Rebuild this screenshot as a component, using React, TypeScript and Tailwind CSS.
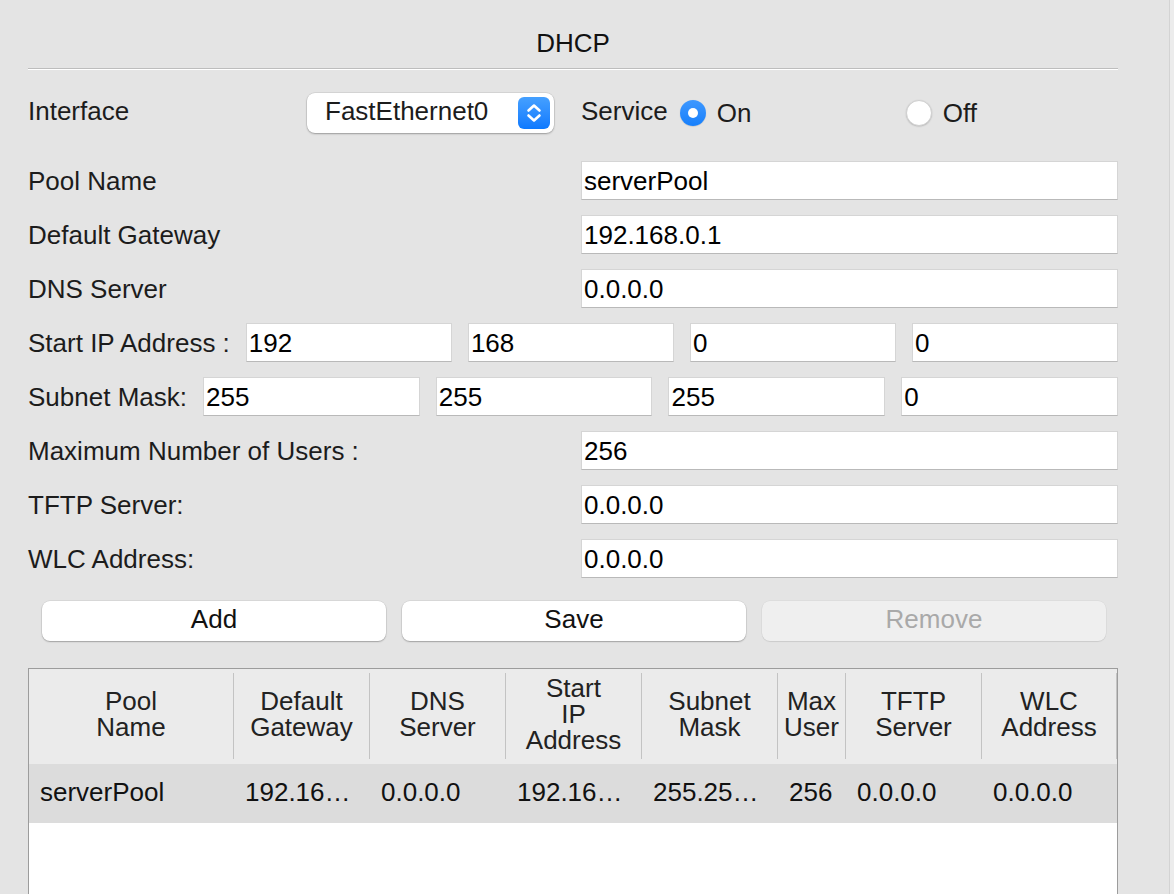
import React from "react";

const FONT = "font-['Liberation_Sans','Helvetica','Arial',sans-serif]";

function Field({ value, className = "" }: { value: string; className?: string }) {
  return (
    <div
      className={`h-[39px] bg-white border border-[#d5d5d5] border-b-[#b9b9b9] flex items-center pl-[2px] text-black whitespace-nowrap ${className}`}
    >
      <span className="leading-[26px]">{value}</span>
    </div>
  );
}

function FieldRow({ label, value }: { label: string; value: string }) {
  return (
    <div className="flex items-center h-[39px]">
      <div className="flex-1 leading-[26px] text-[#1c1c1c]">{label}</div>
      <Field value={value} className="w-[537px]" />
    </div>
  );
}

function QuadRow({ label, values }: { label: string; values: string[] }) {
  return (
    <div className="flex items-center h-[39px] gap-[16px]">
      <div className="leading-[26px] text-[#1c1c1c] whitespace-nowrap">{label}</div>
      {values.map((v, i) => (
        <Field key={i} value={v} className="flex-1 min-w-0" />
      ))}
    </div>
  );
}

function Chevrons() {
  return (
    <svg width="32" height="32" viewBox="0 0 32 32" fill="none">
      <path d="M10.5 13.5 L16 8.5 L21.5 13.5" stroke="white" strokeWidth="2.6" strokeLinecap="round" strokeLinejoin="round" />
      <path d="M10.5 18.5 L16 23.5 L21.5 18.5" stroke="white" strokeWidth="2.6" strokeLinecap="round" strokeLinejoin="round" />
    </svg>
  );
}

const COLS = [
  { w: "w-[204px]", h: ["Pool", "Name"], v: "serverPool" },
  { w: "w-[135px]", h: ["Default", "Gateway"], v: "192.16…" },
  { w: "w-[135px]", h: ["DNS", "Server"], v: "0.0.0.0" },
  { w: "w-[135px]", h: ["Start", "IP", "Address"], v: "192.16…" },
  { w: "w-[135px]", h: ["Subnet", "Mask"], v: "255.25…" },
  { w: "w-[67px]", h: ["Max", "User"], v: "256" },
  { w: "w-[135px]", h: ["TFTP", "Server"], v: "0.0.0.0" },
  { w: "w-[134px]", h: ["WLC", "Address"], v: "0.0.0.0" },
];

export default function App() {
  return (
    <div className={`w-[1174px] h-[894px] overflow-hidden bg-[#e4e4e4] flex text-[26px] ${FONT}`}>
      <div className="flex-1 pl-[28px] pr-[51px] flex flex-col">
        {/* Title */}
        <div className="pt-[30px] leading-[26px] text-center text-[#111]">DHCP</div>
        <div className="mt-[12px] h-[2px] border-t border-[#bdbdbd] border-b border-b-white" />

        {/* Interface / Service row */}
        <div className="mt-[23px] flex items-center h-[40px]">
          <div className="w-[279px] leading-[26px] text-[#1c1c1c] pb-[4px]">Interface</div>
          <div className="w-[247px] h-[40px] bg-white rounded-[8px] shadow-[0_0_0_0.5px_rgba(0,0,0,0.12),0_1px_2px_rgba(0,0,0,0.28)] flex items-center pl-[18px] pr-[4px]">
            <span className="flex-1 leading-[26px] text-[#1c1c1c] pb-[4px]">FastEthernet0</span>
            <div className="w-[32px] h-[32px] rounded-[6px] bg-gradient-to-b from-[#45a0ff] to-[#0b79ff] flex items-center justify-center">
              <Chevrons />
            </div>
          </div>
          <div className="w-[27px]" />
          <div className="leading-[26px] text-[#1c1c1c] pb-[4px]">Service</div>
          <div className="w-[226px] flex items-center ml-[12px]">
            <div className="w-[26px] h-[26px] rounded-full bg-gradient-to-b from-[#3d98ff] to-[#157ffb] flex items-center justify-center shadow-[0_0.5px_1px_rgba(0,0,0,0.2)]">
              <div className="w-[10px] h-[10px] rounded-full bg-white" />
            </div>
            <span className="ml-[11px] leading-[26px] text-[#1c1c1c]">On</span>
          </div>
          <div className="flex items-center">
            <div className="w-[26px] h-[26px] rounded-full bg-white border border-[#d0d0d0] shadow-[0_0.5px_1.5px_rgba(0,0,0,0.2)]" />
            <span className="ml-[11px] leading-[26px] text-[#1c1c1c]">Off</span>
          </div>
        </div>

        {/* Fields */}
        <div className="mt-[28px] flex flex-col gap-[15px]">
          <FieldRow label="Pool Name" value="serverPool" />
          <FieldRow label="Default Gateway" value="192.168.0.1" />
          <FieldRow label="DNS Server" value="0.0.0.0" />
          <QuadRow label="Start IP Address :" values={["192", "168", "0", "0"]} />
          <QuadRow label="Subnet Mask:" values={["255", "255", "255", "0"]} />
          <FieldRow label="Maximum Number of Users :" value="256" />
          <FieldRow label="TFTP Server:" value="0.0.0.0" />
          <FieldRow label="WLC Address:" value="0.0.0.0" />
        </div>

        {/* Buttons */}
        <div className="mt-[23px] ml-[14px] mr-[12px] flex gap-[16px]">
          <button className="flex-1 h-[40px] rounded-[8px] bg-white shadow-[0_0_0_0.5px_rgba(0,0,0,0.1),0_1px_1.5px_rgba(0,0,0,0.25)] text-[#111] leading-[26px] pb-[4px]">
            Add
          </button>
          <button className="flex-1 h-[40px] rounded-[8px] bg-white shadow-[0_0_0_0.5px_rgba(0,0,0,0.1),0_1px_1.5px_rgba(0,0,0,0.25)] text-[#111] leading-[26px] pb-[4px]">
            Save
          </button>
          <button className="flex-1 h-[40px] rounded-[8px] bg-[#efefef] shadow-[0_0_0_0.5px_rgba(0,0,0,0.06),0_1px_1px_rgba(0,0,0,0.08)] text-[#a9a9a9] leading-[26px] pb-[4px]">
            Remove
          </button>
        </div>

        {/* Table */}
        <div className="mt-[27px] h-[260px] shrink-0 border border-[#9c9c9c] border-b-0 bg-white flex flex-col">
          <div className="flex h-[95px] bg-[#ebebeb]">
            {COLS.map((c, i) => (
              <React.Fragment key={i}>
                <div className={`${c.w} flex items-center justify-center text-center leading-[26px] text-[#222] pb-[6px]`}>
                  <div>
                    {c.h.map((l, j) => (
                      <div key={j}>{l}</div>
                    ))}
                  </div>
                </div>
                <div className="w-px mt-[4px] mb-[5px] bg-[#c3c3c3]" />
              </React.Fragment>
            ))}
          </div>
          <div className="flex h-[59px] bg-[#dcdcdc] items-center">
            {COLS.map((c, i) => (
              <React.Fragment key={i}>
                <div className={`${c.w} pl-[11px] whitespace-nowrap leading-[26px] text-[#111] pb-[4px]`}>{c.v}</div>
                <div className="w-px" />
              </React.Fragment>
            ))}
          </div>
        </div>
      </div>
      <div className="w-[5px] border-l border-[#d3d3d3] bg-[#ececec]" />
    </div>
  );
}
